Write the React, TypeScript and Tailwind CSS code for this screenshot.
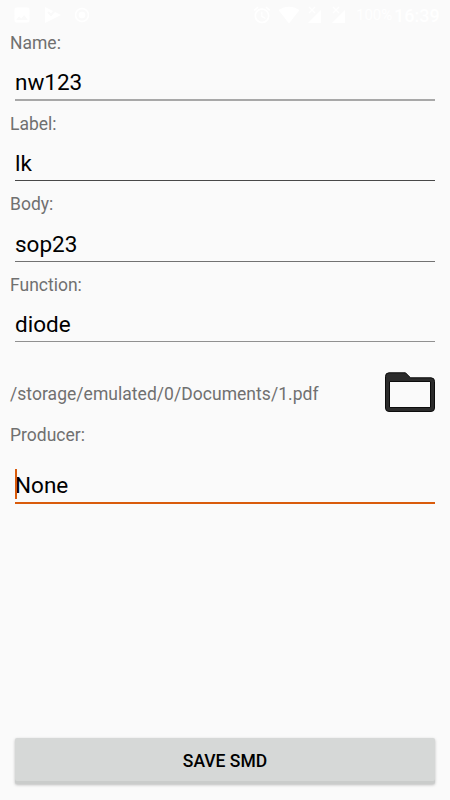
import { useState } from 'react';

type FieldProps = {
  label: string;
  value: string;
  lineClass: string;
  onChange: (value: string) => void;
};

function Field({ label, value, lineClass, onChange }: FieldProps) {
  return (
    <label className="block h-[80.7px]">
      <span className="block h-[26px] pl-[10px] text-[17.5px] leading-[26px] text-[#707070]">{label}</span>
      <input
        value={value}
        onChange={e => onChange(e.target.value)}
        className={`ml-[15px] block w-[420px] bg-transparent pb-0 text-[22.5px] leading-[34px] text-black outline-none ${lineClass}`}
      />
    </label>
  );
}

function StatusBar() {
  return (
    <header className="flex h-[30px] items-center text-white">
      <svg className="ml-[12px] h-[20px] w-[20px] shrink-0" viewBox="0 0 24 24" fill="currentColor">
        <path d="M21 19V5c0-1.1-.9-2-2-2H5c-1.1 0-2 .9-2 2v14c0 1.1.9 2 2 2h14c1.100 0 2-.9 2-2zM8.500 13.500l2.500 3.010L14.500 12l4.500 6H5l3.500-4.500z" />
      </svg>
      <svg className="ml-[12px] h-[18px] w-[18px] shrink-0" viewBox="0 0 18 18">
        <path fill="currentColor" d="M1 1l16 8-16 8z" />
        <path fill="none" stroke="#fafafa" strokeWidth="2" d="M4 6l3 3 6-7" />
      </svg>
      <svg className="ml-[12px] h-[16px] w-[16px] shrink-0" viewBox="0 0 16 16">
        <circle cx="8" cy="8" r="6.500" fill="none" stroke="currentColor" strokeWidth="1.500" />
        <circle cx="8" cy="8" r="3.300" fill="currentColor" />
      </svg>
      <svg className="ml-[162px] h-[20px] w-[20px] shrink-0" viewBox="0 0 24 24" fill="currentColor">
        <path d="M22 5.720l-4.600-3.860-1.290 1.530 4.600 3.860L22 5.720zM7.880 3.390L6.600 1.860 2 5.710l1.290 1.530 4.590-3.850zM12.500 8H11v6l4.750 2.850.75-1.230-4-2.370V8zM12 4c-4.970 0-9 4.030-9 9s4.020 9 9 9a9 9 0 0 0 0-18zm0 16c-3.870 0-7-3.130-7-7s3.130-7 7-7 7 3.130 7 7-3.130 7-7 7z" />
      </svg>
      <svg className="ml-[6px] h-[18px] w-[22px] shrink-0" viewBox="0 0 22 18" fill="currentColor">
        <path d="M0.500 4C7-0.500 15-0.500 21.500 4L11 17.500z" />
      </svg>
      <svg className="ml-[7px] h-[18px] w-[16px] shrink-0" viewBox="0 0 16 18">
        <path fill="currentColor" d="M1 17L14 4v13z" />
        <path fill="none" stroke="#fafafa" strokeWidth="3" d="M2 1l7 7M9 1L2 8" />
        <path fill="none" stroke="currentColor" strokeWidth="1.300" d="M2 1l6 6M8 1L2 7" />
      </svg>
      <svg className="ml-[8px] h-[18px] w-[16px] shrink-0" viewBox="0 0 16 18">
        <path fill="currentColor" d="M1 17L14 4v13z" />
        <path fill="none" stroke="#fafafa" strokeWidth="3" d="M2 1l7 7M9 1L2 8" />
        <path fill="none" stroke="currentColor" strokeWidth="1.300" d="M2 1l6 6M8 1L2 7" />
      </svg>
      <span className="ml-[9px] w-[35px] text-[15px] leading-none">100%</span>
      <span className="ml-[3px] pt-[2px] text-[18px] leading-none font-medium">16:39</span>
    </header>
  );
}

export default function App() {
  const [name, setName] = useState('nw123');
  const [label, setLabel] = useState('lk');
  const [body, setBody] = useState('sop23');
  const [func, setFunc] = useState('diode');
  const [producer, setProducer] = useState('None');

  return (
    <div className="flex h-[800px] w-[450px] flex-col overflow-hidden bg-[#fafafa] font-[Roboto,sans-serif]">
      <StatusBar />
      <main className="flex flex-1 flex-col">
        <Field label="Name:" value={name} onChange={setName} lineClass="h-[45px] pt-[9.5px] border-b-2 border-[#a8a8a8]" />
        <Field label="Label:" value={label} onChange={setLabel} lineClass="h-[44.2px] pt-[9px] border-b border-[#484848]" />
        <Field label="Body:" value={body} onChange={setBody} lineClass="h-[44.2px] pt-[9.5px] border-b border-[#727272]" />
        <Field label="Function:" value={func} onChange={setFunc} lineClass="h-[44.2px] pt-[9.5px] border-b border-[#909090]" />

        <div className="mt-[9.2px] flex h-[60px] items-center justify-between pr-[15px] pl-[10px]">
          <span className="pt-[4px] text-[17.5px] leading-[26px] tracking-[0.04px] text-[#707070]">
            /storage/emulated/0/Documents/1.pdf
          </span>
          <button aria-label="Choose file" className="mt-px h-[40px] w-[50px]">
            <svg className="h-[40px] w-[50px]" viewBox="0 0 50 40">
              <path
                fill="#2b2b2b"
                stroke="#0c0c0c"
                fillRule="evenodd"
                d="M4 .8h16.500l5 5H46q3.500 0 3.500 3.500v26.700q0 3.500-3.500 3.500H4q-3.500 0-3.500-3.500V4.300Q.5.8 4 .8zM4.500 9.500v26h41v-26z"
              />
            </svg>
          </button>
        </div>

        <div className="relative">
          <Field label="Producer:" value={producer} onChange={setProducer} lineClass="h-[56px] pt-[20px] border-b-2 border-[#d95b0b]" />
          <span className="absolute top-[47px] left-[15px] h-[30px] w-[2px] bg-[#d95b0b]" />
        </div>

        <button className="mx-[15px] mt-auto mb-[16px] h-[46px] rounded-[2px] bg-[#d6d8d7] pt-px text-[17.5px] font-medium text-black shadow-[0_1px_3px_rgba(0,0,0,0.25),inset_0_-3px_0_#cacccb]">
          SAVE SMD
        </button>
      </main>
    </div>
  );
}
